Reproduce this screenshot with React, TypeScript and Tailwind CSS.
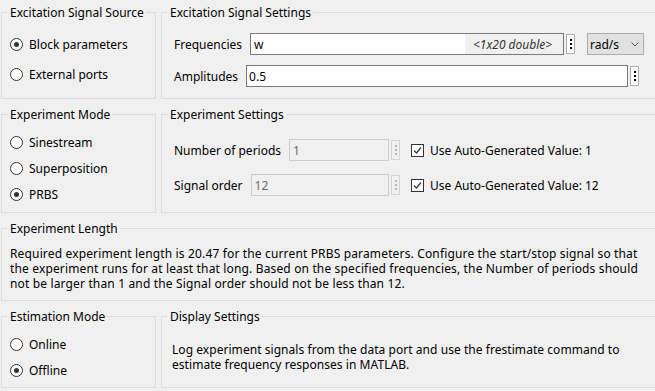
import type { ReactNode } from "react";

const font = "font-['Noto_Sans',sans-serif] text-[12px] leading-[15px] text-black";

function Group({ title, className, children }: { title: string; className?: string; children?: ReactNode }) {
  return (
    <div className={`relative border border-[#dcdcdc] ${className ?? ""}`}>
      <span className="absolute left-[6px] top-[-9px] bg-[#f0f0f0] px-[2px] leading-[17px] whitespace-nowrap">
        {title}
      </span>
      {children}
    </div>
  );
}

function Radio({ label, checked }: { label: string; checked?: boolean }) {
  return (
    <div className="flex h-[20px] items-center gap-[6px]">
      <span className="flex h-[13px] w-[13px] items-center justify-center rounded-full border border-[#333333] bg-white">
        {checked && <span className="h-[5px] w-[5px] rounded-full bg-[#333333]" />}
      </span>
      <span className="whitespace-nowrap">{label}</span>
    </div>
  );
}

function Check({ label }: { label: string }) {
  return (
    <div className="flex items-center gap-[6px]">
      <span className="flex h-[13px] w-[13px] items-center justify-center border border-[#333333] bg-white">
        <svg width="11" height="11" viewBox="0 0 11 11">
          <polyline points="2,5.5 4.5,8 9,2.5" fill="none" stroke="#333333" strokeWidth="1.2" />
        </svg>
      </span>
      <span className="whitespace-nowrap">{label}</span>
    </div>
  );
}

function Dots({ disabled, className }: { disabled?: boolean; className?: string }) {
  const dot = disabled ? "bg-[#b5b5b5]" : "bg-black";
  return (
    <div
      className={`flex h-[20px] w-[9px] shrink-0 flex-col items-center justify-center gap-[2px] border ${
        disabled ? "border-[#d5d5d5] bg-[#f0f0f0]" : "border-[#adadad] bg-[#fbfbfb]"
      } ${className ?? ""}`}
    >
      <span className={`h-[2px] w-[2px] ${dot}`} />
      <span className={`h-[2px] w-[2px] ${dot}`} />
      <span className={`h-[2px] w-[2px] ${dot}`} />
    </div>
  );
}

export default function App() {
  return (
    <div className={`h-[391px] w-[655px] overflow-hidden bg-[#f0f0f0] ${font}`}>
      <div className="flex w-[662px] flex-col gap-[15px] pl-[1px] pt-[12px]">
        {/* row 1 */}
        <div className="flex gap-[5px]">
          <Group title="Excitation Signal Source" className="h-[87px] w-[155px] shrink-0">
            <div className="flex flex-col gap-[10px] pl-[8px] pt-[21px]">
              <Radio label="Block parameters" checked />
              <Radio label="External ports" />
            </div>
          </Group>
          <Group title="Excitation Signal Settings" className="h-[87px] flex-1">
            <div className="flex flex-col gap-[10px] pl-[12px] pt-[20px]">
              <div className="flex w-[470px] items-center">
                <span className="mr-[8px] whitespace-nowrap">Frequencies</span>
                <div className="flex h-[22px] flex-1 items-center border border-[#7a7a7a] bg-white">
                  <span className="flex-1 pl-[3px]">w</span>
                  <span className="flex h-full w-[98px] items-center bg-[#f0f0f0] pl-[8px] italic text-[#333333]">
                    &lt;1x20 double&gt;
                  </span>
                </div>
                <Dots className="ml-[2px]" />
                <div className="ml-[12px] flex h-[22px] w-[57px] items-center justify-between border border-[#adadad] bg-[#e1e1e1] pl-[2px] pr-[4px]">
                  <span>rad/s</span>
                  <svg width="8" height="5" viewBox="0 0 8 5">
                    <polyline points="0.5,0.5 4,4 7.5,0.5" fill="none" stroke="#555555" strokeWidth="1" />
                  </svg>
                </div>
              </div>
              <div className="flex w-[465px] items-center">
                <span className="mr-[8px] whitespace-nowrap">Amplitudes</span>
                <div className="flex h-[22px] flex-1 items-center border border-[#7a7a7a] bg-white pl-[2px]">
                  0.5
                </div>
                <Dots className="ml-[2px]" />
              </div>
            </div>
          </Group>
        </div>

        {/* row 2 */}
        <div className="flex gap-[5px]">
          <Group title="Experiment Mode" className="h-[99px] w-[155px] shrink-0">
            <div className="flex flex-col gap-[6px] pl-[8px] pt-[17px]">
              <Radio label="Sinestream" />
              <Radio label="Superposition" />
              <Radio label="PRBS" checked />
            </div>
          </Group>
          <Group title="Experiment Settings" className="h-[99px] flex-1">
            <div className="flex flex-col gap-[13px] pl-[12px] pt-[24px]">
              <div className="flex items-center">
                <div className="flex w-[215px] items-center">
                  <span className="mr-[8px] whitespace-nowrap">Number of periods</span>
                  <div className="flex h-[22px] flex-1 items-center border border-[#cccccc] bg-[#f0f0f0] pl-[3px] text-[#6d6d6d]">
                    1
                  </div>
                </div>
                <Dots disabled className="ml-[2px]" />
                <div className="ml-[11px]">
                  <Check label="Use Auto-Generated Value: 1" />
                </div>
              </div>
              <div className="flex items-center">
                <div className="flex w-[215px] items-center">
                  <span className="mr-[8px] whitespace-nowrap">Signal order</span>
                  <div className="flex h-[22px] flex-1 items-center border border-[#cccccc] bg-[#f0f0f0] pl-[3px] text-[#6d6d6d]">
                    12
                  </div>
                </div>
                <Dots disabled className="ml-[2px]" />
                <div className="ml-[11px]">
                  <Check label="Use Auto-Generated Value: 12" />
                </div>
              </div>
            </div>
          </Group>
        </div>

        {/* row 3 */}
        <Group title="Experiment Length" className="h-[73px]">
          <div className="pl-[8px] pt-[17px] tracking-[0.15px]">
            <div className="whitespace-nowrap">
              Required experiment length is 20.47 for the current PRBS parameters. Configure the start/stop signal so that
            </div>
            <div className="whitespace-nowrap">
              the experiment runs for at least that long. Based on the specified frequencies, the Number of periods should
            </div>
            <div className="whitespace-nowrap">
              not be larger than 1 and the Signal order should not be less than 12.
            </div>
          </div>
        </Group>

        {/* row 4 */}
        <div className="flex gap-[5px]">
          <Group title="Estimation Mode" className="h-[72px] w-[155px] shrink-0">
            <div className="flex flex-col gap-[6px] pl-[8px] pt-[17px]">
              <Radio label="Online" />
              <Radio label="Offline" checked />
            </div>
          </Group>
          <Group title="Display Settings" className="h-[72px] flex-1">
            <div className="pl-[10px] pt-[25px] tracking-[0.05px]">
              <div className="whitespace-nowrap">
                Log experiment signals from the data port and use the frestimate command to
              </div>
              <div className="whitespace-nowrap">estimate frequency responses in MATLAB.</div>
            </div>
          </Group>
        </div>
      </div>
    </div>
  );
}
